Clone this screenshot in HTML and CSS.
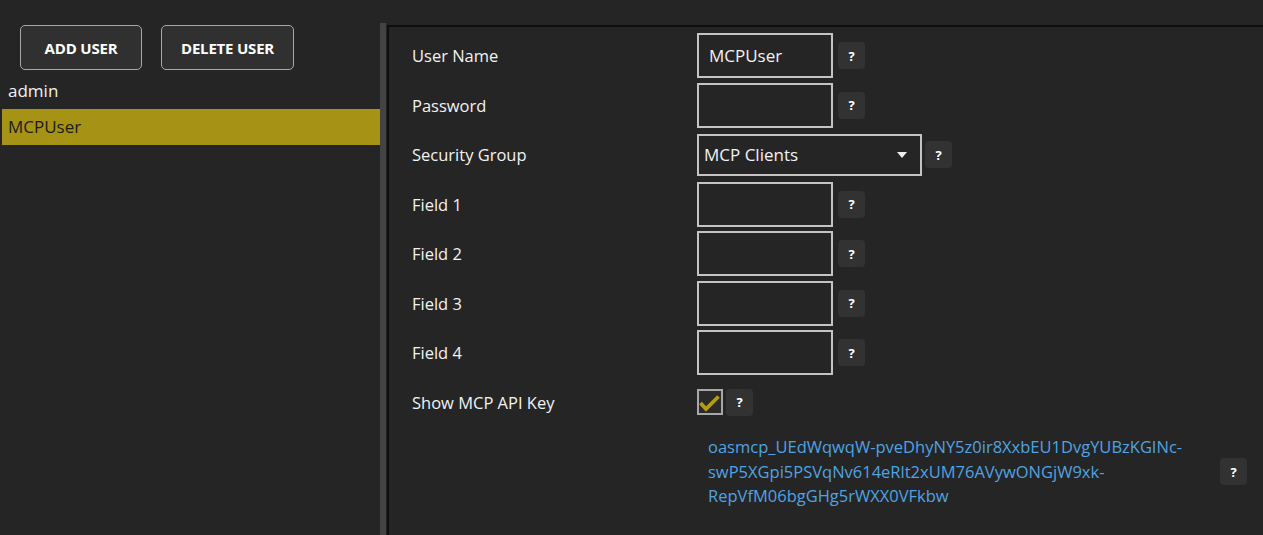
FILE: index.html
```html
<!DOCTYPE html>
<html lang="en">
<head>
    <meta charset="UTF-8">
    <title>Users</title>
    <link rel="stylesheet" href="styles.css">
</head>
<body>
    <!-- ユーザー一覧 -->
    <div class="sidebar">
        <div class="toolbar">
            <button class="btn">ADD USER</button>
            <button class="btn">DELETE USER</button>
        </div>
        <ul class="user-list">
            <li>admin</li>
            <li class="selected">MCPUser</li>
        </ul>
    </div>

    <div class="splitter"></div>

    <!-- ユーザー詳細 -->
    <div class="main">
        <div class="form-row">
            <label>User Name</label>
            <div class="field">MCPUser</div>
            <span class="help">?</span>
        </div>
        <div class="form-row">
            <label>Password</label>
            <div class="field"></div>
            <span class="help">?</span>
        </div>
        <div class="form-row">
            <label>Security Group</label>
            <div class="dropdown">MCP Clients<span class="arrow"></span></div>
            <span class="help help-tight">?</span>
        </div>
        <div class="form-row">
            <label>Field 1</label>
            <div class="field"></div>
            <span class="help">?</span>
        </div>
        <div class="form-row">
            <label>Field 2</label>
            <div class="field"></div>
            <span class="help">?</span>
        </div>
        <div class="form-row">
            <label>Field 3</label>
            <div class="field"></div>
            <span class="help">?</span>
        </div>
        <div class="form-row">
            <label>Field 4</label>
            <div class="field"></div>
            <span class="help">?</span>
        </div>
        <div class="form-row">
            <label>Show MCP API Key</label>
            <div class="checkbox">
                <svg width="22" height="22" viewBox="0 0 22 22">
                    <path d="M1.5 12 L7 18 L19.5 5.5" fill="none" stroke="#b49c12" stroke-width="3.8"/>
                </svg>
            </div>
            <span class="help help-tight">?</span>
        </div>
        <div class="api-key-row">
            <div class="api-key">oasmcp_UEdWqwqW-pveDhyNY5z0ir8XxbEU1DvgYUBzKGINc-swP5XGpi5PSVqNv614eRlt2xUM76AVywONGjW9xk-RepVfM06bgGHg5rWXX0VFkbw</div>
            <span class="help">?</span>
        </div>
    </div>
</body>
</html>
```

FILE: styles.css
```css
* {
    margin: 0;
    padding: 0;
    box-sizing: border-box;
}
body {
    font-family: 'Open Sans', 'Noto Sans', sans-serif;
    font-size: 16.5px;
    background-color: #252525;
    color: #f2f2f2;
    display: flex;
    height: 535px;
    overflow: hidden;
}
.sidebar {
    width: 380px;
    flex-shrink: 0;
}
.toolbar {
    display: flex;
    gap: 19px;
    padding: 25px 0 0 20px;
}
.btn {
    height: 45px;
    min-width: 122px;
    padding: 0 19px;
    background-color: #303030;
    border: 1px solid #a8a8a8;
    border-radius: 5px;
    color: white;
    font-family: inherit;
    font-size: 15px;
    font-weight: bold;
    letter-spacing: -0.2px;
}
.user-list {
    list-style: none;
    margin: 3px 0 0 2px;
}
.user-list li {
    height: 36px;
    line-height: 36px;
    padding-left: 6px;
    font-size: 17px;
}
.user-list li.selected {
    background-color: #a69214;
    color: #1c1c1c;
}
.splitter {
    width: 6px;
    flex-shrink: 0;
    margin-top: 23px;
    background-color: #434343;
}
.main {
    flex: 1;
    margin: 25px 0 0 1px;
    border-top: 2px solid #0e0e0e;
    border-left: 2px solid #0e0e0e;
    padding: 4px 0 0 23px;
}
.form-row {
    display: flex;
    align-items: center;
    height: 49.5px;
}
.form-row label {
    width: 285px;
    flex-shrink: 0;
}
.field {
    width: 136px;
    height: 45px;
    border: 2px solid #c4c4c4;
    padding-left: 10px;
    line-height: 41px;
    font-size: 17px;
}
.dropdown {
    position: relative;
    width: 225px;
    height: 42px;
    border: 2px solid #c4c4c4;
    padding-left: 5px;
    line-height: 38px;
    font-size: 17px;
}
.arrow {
    position: absolute;
    right: 13px;
    top: 16px;
    border-left: 5px solid transparent;
    border-right: 5px solid transparent;
    border-top: 6px solid #eeeeee;
}
.checkbox {
    width: 26px;
    height: 26px;
    border: 2px solid #a8a8a8;
    background-color: #2a2a2a;
    display: flex;
    align-items: center;
    justify-content: center;
}
.help {
    display: inline-flex;
    align-items: center;
    justify-content: center;
    width: 27px;
    height: 27px;
    margin-left: 5px;
    background-color: #323232;
    border-radius: 4px;
    font-size: 13px;
    font-weight: bold;
    color: white;
}
.help-tight {
    margin-left: 3px;
}
.api-key-row {
    display: flex;
    align-items: center;
    margin: 8px 0 0 285px;
}
.api-key {
    width: 517px;
    padding-left: 11px;
    line-height: 24.5px;
    color: #4fa3e3;
    overflow-wrap: anywhere;
}
.api-key-row .help {
    margin-left: 6px;
}
```
